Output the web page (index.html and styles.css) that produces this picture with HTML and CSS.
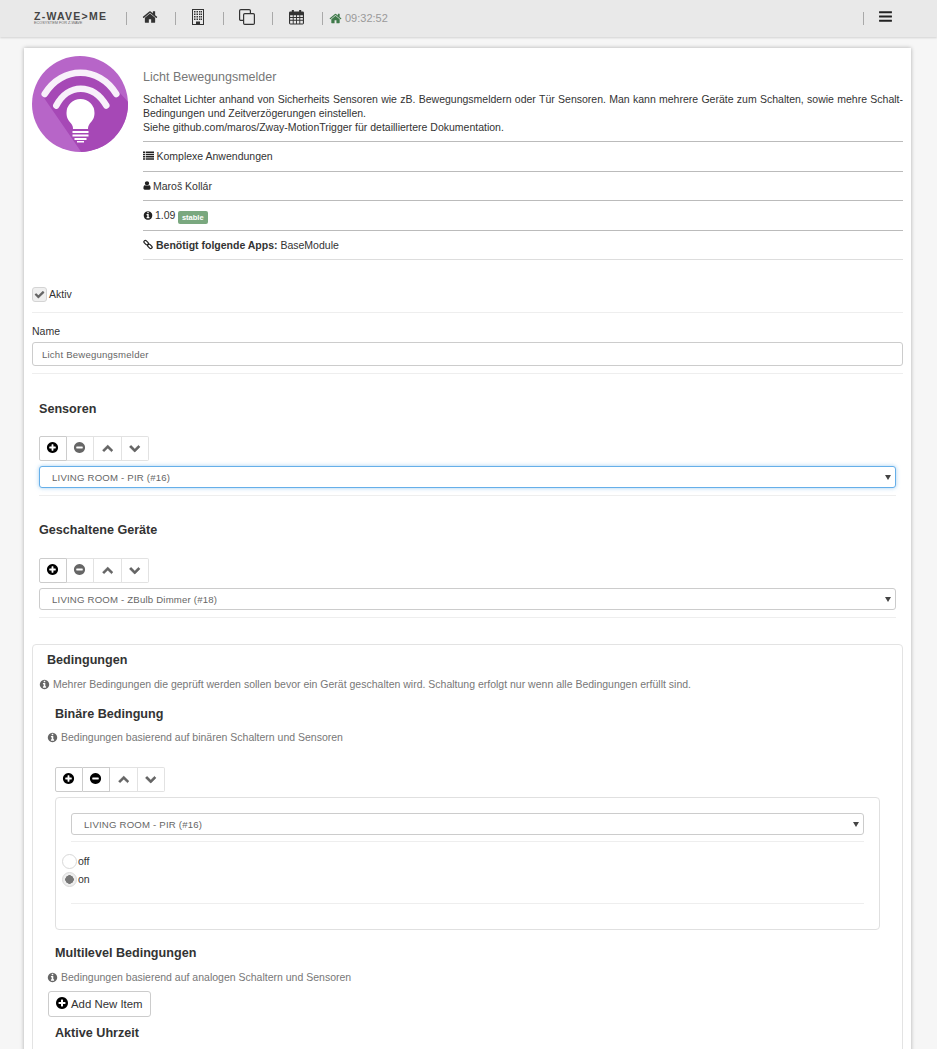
FILE: index.html
```html
<!DOCTYPE html>
<html lang="de">
<head>
<meta charset="utf-8">
<title>Licht Bewegungsmelder</title>
<link rel="stylesheet" href="styles.css">
</head>
<body>
<svg class="sprite" width="0" height="0" aria-hidden="true">
  <symbol id="i-home" viewBox="0 0 1792 1792"><path d="M1472 992v480q0 26-19 45t-45 19h-384v-384h-256v384h-384q-26 0-45-19t-19-45v-480q0-1 .5-3t.5-3l575-474 575 474q1 2 1 6zm223-69l-62 74q-8 9-21 11h-3q-13 0-21-7l-692-577-692 577q-12 8-24 7-13-2-21-11l-62-74q-8-10-7-23.500t11-21.500l719-599q32-26 76-26t76 26l244 204v-195q0-14 9-23t23-9h192q14 0 23 9t9 23v408l219 182q10 8 11 21.500t-7 23.500z"/></symbol>
  <symbol id="i-plus" viewBox="0 0 1792 1792"><path d="M1344 960v-128q0-26-19-45t-45-19h-256v-256q0-26-19-45t-45-19h-128q-26 0-45 19t-19 45v256h-256q-26 0-45 19t-19 45v128q0 26 19 45t45 19h256v256q0 26 19 45t45 19h128q26 0 45-19t19-45v-256h256q26 0 45-19t19-45zm320-64q0 209-103 385.500t-279.500 279.500-385.500 103-385.500-103-279.500-279.500-103-385.500 103-385.500 279.500-279.500 385.500-103 385.500 103 279.500 279.500 103 385.500z"/></symbol>
  <symbol id="i-minus" viewBox="0 0 1792 1792"><path d="M1344 960v-128q0-26-19-45t-45-19h-768q-26 0-45 19t-19 45v128q0 26 19 45t45 19h768q26 0 45-19t19-45zm320-64q0 209-103 385.500t-279.500 279.500-385.500 103-385.500-103-279.500-279.500-103-385.500 103-385.500 279.500-279.500 385.500-103 385.500 103 279.500 279.500 103 385.500z"/></symbol>
  <symbol id="i-up" viewBox="0 0 1792 1792"><path d="M1683 1331l-166 165q-19 19-45 19t-45-19l-531-531-531 531q-19 19-45 19t-45-19l-166-165q-19-19-19-45.500t19-45.500l742-741q19-19 45-19t45 19l742 741q19 19 19 45.500t-19 45.500z"/></symbol>
  <symbol id="i-down" viewBox="0 0 1792 1792"><path d="M1683 808l-742 741q-19 19-45 19t-45-19l-742-741q-19-19-19-45.500t19-45.500l166-165q19-19 45-19t45 19l531 531 531-531q19-19 45-19t45 19l166 165q19 19 19 45.500t-19 45.500z"/></symbol>
  <symbol id="i-bars" viewBox="0 0 1792 1792"><path d="M1664 1344v128q0 26-19 45t-45 19h-1408q-26 0-45-19t-19-45v-128q0-26 19-45t45-19h1408q26 0 45 19t19 45zm0-512v128q0 26-19 45t-45 19h-1408q-26 0-45-19t-19-45v-128q0-26 19-45t45-19h1408q26 0 45 19t19 45zm0-512v128q0 26-19 45t-45 19h-1408q-26 0-45-19t-19-45v-128q0-26 19-45t45-19h1408q26 0 45 19t19 45z"/></symbol>
  <symbol id="i-check" viewBox="0 0 1792 1792"><path d="M1671 566q0 40-28 68l-724 724-136 136q-28 28-68 28t-68-28l-136-136-362-362q-28-28-28-68t28-68l136-136q28-28 68-28t68 28l294 295 656-657q28-28 68-28t68 28l136 136q28 28 28 68z"/></symbol>
  <symbol id="i-user" viewBox="0 0 1792 1792"><path d="M1536 1399q0 109-62.500 187t-150.500 78h-854q-88 0-150.500-78t-62.500-187q0-85 8.500-160.500t31.500-152 58.500-131 94-89 134.500-34.500q131 128 313 128t313-128q76 0 134.500 34.500t94 89 58.500 131 31.500 152 8.500 160.500zm-256-887q0 159-112.500 271.500t-271.500 112.500-271.500-112.500-112.500-271.500 112.500-271.500 271.500-112.500 271.500 112.500 112.500 271.500z"/></symbol>
  <symbol id="i-info" viewBox="0 0 1792 1792"><path d="M1152 1376v-160q0-14-9-23t-23-9h-96v-512q0-14-9-23t-23-9h-320q-14 0-23 9t-9 23v160q0 14 9 23t23 9h96v320h-96q-14 0-23 9t-9 23v160q0 14 9 23t23 9h448q14 0 23-9t9-23zm-128-896v-160q0-14-9-23t-23-9h-192q-14 0-23 9t-9 23v160q0 14 9 23t23 9h192q14 0 23-9t9-23zm640 416q0 209-103 385.500t-279.500 279.500-385.500 103-385.500-103-279.500-279.500-103-385.500 103-385.500 279.500-279.500 385.500-103 385.500 103 279.500 279.500 103 385.500z"/></symbol>
  <symbol id="i-list" viewBox="0 0 16 16"><path d="M0 2h3v2.400H0zM4 2h12v2.400H4zM0 5.300h3v2.400H0zM4 5.300h12v2.400H4zM0 8.600h3V11H0zM4 8.600h12V11H4zM0 11.900h3v2.400H0zM4 11.900h12v2.400H4z"/></symbol>
  <symbol id="i-link" viewBox="0 0 16 16"><g fill="none" stroke="currentColor" stroke-width="2"><rect x="-4" y="-2.300" width="8" height="4.600" rx="2.300" transform="translate(5 5) rotate(45)"/><rect x="-4" y="-2.300" width="8" height="4.600" rx="2.300" transform="translate(11 11) rotate(45)"/></g></symbol>
  <symbol id="i-building" viewBox="0 0 12 16"><path d="M0 0h12v16H0zM1 1v14h3v-2.500h4V15h3V1z"/><path d="M2 2h1.500v1.500H2zM4.500 2H6v1.500H4.500zM7 2h1.500v1.500H7zM9 2h1v1.500H9zM2 4.500h1.500V6H2zM4.500 4.500H6V6H4.500zM7 4.500h1.500V6H7zM9 4.500h1V6H9zM2 7h1.500v1.500H2zM4.500 7H6v1.500H4.500zM7 7h1.500v1.500H7zM9 7h1v1.500H9zM2 9.500h1.500V11H2zM4.500 9.500H6V11H4.500zM7 9.500h1.500V11H7zM9 9.500h1V11H9z"/></symbol>
  <symbol id="i-clone" viewBox="0 0 16 16"><g fill="none" stroke="currentColor" stroke-width="1.200"><path d="M4 11.400H1.800a1.200 1.200 0 0 1-1.200-1.200V1.800A1.200 1.200 0 0 1 1.800.6h8.400a1.200 1.200 0 0 1 1.200 1.200V4"/><rect x="4.600" y="4.600" width="10.800" height="10.800" rx="1.200"/></g></symbol>
  <symbol id="i-calendar" viewBox="0 0 16 16"><path fill-rule="evenodd" d="M1.500 2H3V0.500h2.200V2h5.600V0.500H13V2h1.500A1.500 1.500 0 0 1 16 3.500v11a1.500 1.500 0 0 1-1.500 1.500h-13A1.500 1.500 0 0 1 0 14.500v-11A1.500 1.500 0 0 1 1.500 2zM1.200 6v2h2.800V6zM5 6v2h2.500V6zM8.500 6v2H11V6zM12 6v2h2.800V6zM1.200 9v2h2.800V9zM5 9v2h2.500V9zM8.500 9v2H11V9zM12 9v2h2.800V9zM1.200 12v2.800h2.800V12zM5 12v2.800h2.500V12zM8.500 12v2.800H11V12zM12 12v2.800h2.800V12z"/></symbol>
</svg>

<header class="topbar">
  <div class="brand">
    <span class="brand-name">Z-WAVE&gt;ME</span>
    <span class="brand-tag">ECOSYSTEM FOR Z-WAVE</span>
  </div>
  <nav class="nav">
    <a class="nav-item"><svg class="nav-icon"><use href="#i-home"/></svg></a>
    <a class="nav-item nav-item-narrow"><svg class="nav-icon nav-building"><use href="#i-building"/></svg></a>
    <a class="nav-item"><svg class="nav-icon"><use href="#i-clone"/></svg></a>
    <a class="nav-item nav-item-wide"><svg class="nav-icon nav-calendar"><use href="#i-calendar"/></svg></a>
    <span class="nav-clock"><svg class="clock-icon"><use href="#i-home"/></svg>09:32:52</span>
  </nav>
  <a class="nav-menu"><svg class="nav-icon nav-bars"><use href="#i-bars"/></svg></a>
</header>

<main class="card">
  <section class="app-head">
    <svg class="app-logo" viewBox="0 0 96 96">
      <defs><clipPath id="disc"><circle cx="48" cy="48" r="48"/></clipPath></defs>
      <circle cx="48" cy="48" r="48" fill="#b765c8"/>
      <path clip-path="url(#disc)" d="M10 39C30 9 67 9 87 36L100 50V100H52z" fill="#a648b6"/>
      <g fill="none" stroke="#f8f0fa" stroke-linecap="round">
        <path stroke-width="6.500" d="M12.700 38C30 9.700 67 9.700 84.300 38"/>
        <path stroke-width="6.500" d="M24.300 49.500C36 27 61 27 74.300 49.500"/>
      </g>
      <path fill="#fff" d="M48.500 43a14 14 0 0 0-14 14c0 6 3 8.500 5 11 1 1.500 1.500 3 1.500 5h15c0-2 .5-3.500 1.500-5 2-2.500 5-5 5-11a14 14 0 0 0-14-14z"/>
      <path fill="#fff" d="M40.500 75h16v2h-16zM40.500 78.500h16v2h-16zM42.500 82h12v2h-12zM45 85h7v1.500h-7z"/>
    </svg>
    <div class="app-info">
      <h1 class="app-title">Licht Bewegungsmelder</h1>
      <p class="app-desc">Schaltet Lichter anhand von Sicherheits Sensoren wie zB. Bewegungsmeldern oder Tür Sensoren. Man kann mehrere Geräte zum Schalten, sowie mehre Schalt-Bedingungen und Zeitverzögerungen einstellen.<br>Siehe github.com/maros/Zway-MotionTrigger für detailliertere Dokumentation.</p>
      <div class="meta meta-first"><svg class="ico ico-list"><use href="#i-list"/></svg>Komplexe Anwendungen</div>
      <div class="meta"><svg class="ico ico-user"><use href="#i-user"/></svg>Maroš Kollár</div>
      <div class="meta"><svg class="ico ico-info"><use href="#i-info"/></svg>1.09<span class="badge">stable</span></div>
      <div class="meta"><svg class="ico ico-link"><use href="#i-link"/></svg><strong>Benötigt folgende Apps:</strong>&nbsp;BaseModule</div>
    </div>
  </section>

  <div class="row-active">
    <label class="check"><svg class="check-mark"><use href="#i-check"/></svg></label>
    <span>Aktiv</span>
  </div>

  <div class="row-name">
    <label class="field-label">Name</label>
    <input class="text-input" type="text" value="Licht Bewegungsmelder">
  </div>

  <section class="group">
    <h2 class="group-title">Sensoren</h2>
    <div class="toolbar">
      <button class="tool tool-on"><svg><use href="#i-plus"/></svg></button>
      <button class="tool"><svg><use href="#i-minus"/></svg></button>
      <button class="tool tool-arrow"><svg><use href="#i-up"/></svg></button>
      <button class="tool tool-arrow"><svg><use href="#i-down"/></svg></button>
    </div>
    <select class="picker picker-focus"><option>LIVING ROOM - PIR (#16)</option></select>
  </section>

  <section class="group group-second">
    <h2 class="group-title">Geschaltene Geräte</h2>
    <div class="toolbar">
      <button class="tool tool-on"><svg><use href="#i-plus"/></svg></button>
      <button class="tool"><svg><use href="#i-minus"/></svg></button>
      <button class="tool tool-arrow"><svg><use href="#i-up"/></svg></button>
      <button class="tool tool-arrow"><svg><use href="#i-down"/></svg></button>
    </div>
    <select class="picker"><option>LIVING ROOM - ZBulb Dimmer (#18)</option></select>
  </section>

  <section class="panel">
    <h2 class="panel-title">Bedingungen</h2>
    <p class="help help-panel"><svg class="help-icon"><use href="#i-info"/></svg>Mehrer Bedingungen die geprüft werden sollen bevor ein Gerät geschalten wird. Schaltung erfolgt nur wenn alle Bedingungen erfüllt sind.</p>

    <h3 class="sub-title sub-binary">Binäre Bedingung</h3>
    <p class="help help-sub"><svg class="help-icon"><use href="#i-info"/></svg>Bedingungen basierend auf binären Schaltern und Sensoren</p>

    <div class="toolbar toolbar-sub">
      <button class="tool tool-on"><svg><use href="#i-plus"/></svg></button>
      <button class="tool tool-on"><svg><use href="#i-minus"/></svg></button>
      <button class="tool tool-arrow"><svg><use href="#i-up"/></svg></button>
      <button class="tool tool-arrow"><svg><use href="#i-down"/></svg></button>
    </div>
    <div class="inner-box">
      <div class="inner-select"><select class="picker picker-inner"><option>LIVING ROOM - PIR (#16)</option></select></div>
      <div class="radio-list">
        <div class="radio-row"><span class="radio"></span>off</div>
        <div class="radio-row"><span class="radio radio-on"></span>on</div>
      </div>
      <div class="inner-rule"></div>
    </div>

    <h3 class="sub-title sub-multi">Multilevel Bedingungen</h3>
    <p class="help help-sub help-multi"><svg class="help-icon"><use href="#i-info"/></svg>Bedingungen basierend auf analogen Schaltern und Sensoren</p>
    <button class="add-btn"><svg><use href="#i-plus"/></svg>Add New Item</button>
    <h3 class="sub-title sub-time">Aktive Uhrzeit</h3>
  </section>
</main>
</body>
</html>
```
FILE: styles.css
```css
* { box-sizing: border-box; }
html, body { height: 1049px; overflow: hidden; }
body {
  margin: 0;
  background: #f6f6f6;
  color: #333;
  font-family: "Liberation Sans", Arial, sans-serif;
  font-size: 10.5px;
  line-height: 14px;
}
svg { fill: currentColor; }
.sprite { position: absolute; }

.topbar {
  height: 37px;
  background: #e9e9e9;
  box-shadow: 0 1px 2px rgba(0,0,0,.15);
  display: flex;
  align-items: center;
  padding: 0 44px 0 34px;
}
.brand { width: 92px; display: flex; flex-direction: column; }
.brand-name { font-size: 10.5px; line-height: 9px; font-weight: 700; letter-spacing: 1.25px; color: #444; white-space: nowrap; }
.brand-tag { font-size: 3.800px; line-height: 5px; color: #666; white-space: nowrap; }
.nav { display: flex; align-items: center; flex: 1; }
.nav-item {
  height: 13px;
  width: 49px;
  border-left: 1px solid #a9a9a9;
  display: flex;
  align-items: center;
  padding-left: 15px;
  color: #333;
}
.nav-item-narrow { width: 48px; }
.nav-item-wide { width: 50px; }
.nav-icon { width: 16px; height: 16px; flex: none; margin-bottom: 4px; }
.nav-building { width: 12px; margin-left: 1px; }
.nav-calendar { width: 15px; margin-left: 1px; }
.nav-clock {
  border-left: 1px solid #a9a9a9;
  color: #9a9a9a;
  font-size: 11px;
  height: 13px;
  line-height: 13px;
  padding-left: 6px;
  display: flex;
  align-items: center;
  margin-top: -1px;
}
.clock-icon { width: 13px; height: 13px; color: #3f7a4a; margin-right: 3px; }
.nav-menu { border-left: 1px solid #a9a9a9; height: 13px; display: flex; align-items: center; padding-left: 14px; }
.nav-bars { width: 15px; height: 15px; color: #222; }

.card {
  margin: 11px 26px 0 24px;
  height: 1100px;
  background: #fff;
  box-shadow: 0 0 4px rgba(0,0,0,.3);
  padding: 8px 8px 0;
}
.app-head { display: flex; height: 212px; }
.app-logo { width: 96px; height: 96px; flex: none; margin-right: 15px; }
.app-info { flex: 1; min-width: 0; }
.app-title { margin: 14px 0 0; font-size: 12.500px; line-height: 14px; font-weight: 400; color: #777; }
.app-desc { margin: 8px 0 0; padding-bottom: 6px; line-height: 14px; color: #333; text-align: justify; }
.meta {
  border-top: 1px solid #bbb;
  height: 29.700px;
  display: flex;
  align-items: center;
  padding-bottom: 1px;
  white-space: nowrap;
}
.meta:last-child { border-bottom: 1px solid #ddd; height: 30px; }
.meta-first { margin-top: 1px; }
.ico { width: 11px; height: 11px; margin-right: 3px; color: #222; flex: none; }
.ico-list { margin-right: 2.500px; }
.ico-user { width: 10px; margin: 0 1px 0 -1px; }
.ico-info { width: 10px; margin-right: 2px; }
.ico-link { width: 10px; }
.meta strong { color: #333; }
.badge {
  background: #7aa87f;
  color: #fff;
  font-size: 7.500px;
  font-weight: 700;
  line-height: 13px;
  border-radius: 2px;
  padding: 0 4px;
  margin: 4px 0 0 2.500px;
}

.row-active {
  margin-top: 19px;
  height: 26px;
  display: flex;
  align-items: flex-start;
  gap: 2px;
  border-bottom: 1px solid #eee;
}
.row-active span { line-height: 14px; }
.check {
  width: 15px;
  height: 15px;
  border: 1px solid #d4d4d4;
  border-radius: 3px;
  background: #efefef;
  display: flex;
  align-items: center;
  justify-content: center;
  color: #666;
}
.check-mark { width: 11px; height: 11px; }
.row-name { margin-top: 11px; padding-bottom: 7px; border-bottom: 1px solid #eee; }
.field-label { display: block; line-height: 14px; margin-bottom: 4px; }
.text-input {
  display: block;
  width: 100%;
  height: 24px;
  padding: 0 9px;
  border: 1px solid #ccc;
  border-radius: 3px;
  font: 9.600px "Liberation Sans", Arial, sans-serif;
  letter-spacing: .2px;
  color: #666;
  background: #fff;
}

.group { margin: 27px 7px 0; padding-bottom: 7px; border-bottom: 1px solid #eee; }
.group-second { margin-top: 26px; }
.group-title, .panel-title, .sub-title { margin: 0; font-size: 12.600px; line-height: 16px; font-weight: 700; color: #333; }
.toolbar { display: flex; margin-top: 19px; }
.group-second .toolbar { margin-top: 20px; }
.tool {
  width: 27.500px;
  height: 25px;
  padding: 0;
  margin: 0;
  border: 1px solid #e2e2e2;
  border-left-width: 0;
  background: #fff;
  display: flex;
  align-items: center;
  justify-content: center;
  color: #666;
}
.tool:first-child { border-left-width: 1px; border-radius: 2px 0 0 2px; }
.tool:last-child { border-radius: 0 2px 2px 0; }
.tool svg { width: 13px; height: 13px; margin-top: -2px; }
.tool-arrow svg { width: 11.500px; height: 11.500px; stroke: currentColor; stroke-width: 60px; }
.tool-on { color: #000; border-color: #ccc; }
.picker {
  display: block;
  width: 100%;
  height: 22px;
  margin-top: 5px;
  padding: 0 12px;
  border: 1px solid #ccc;
  border-radius: 3px;
  appearance: none;
  background: #fff url("data:image/svg+xml,%3Csvg xmlns='http://www.w3.org/2000/svg' width='6' height='6'%3E%3Cpath d='M0 1h6L3 6z' fill='%23444'/%3E%3C/svg%3E") no-repeat right 4px center;
  font: 9.600px "Liberation Sans", Arial, sans-serif;
  letter-spacing: .2px;
  color: #666;
}
.picker-focus { border-color: #66afe9; box-shadow: 0 0 4px rgba(102,175,233,.6); outline: 0; }

.panel {
  margin-top: 26px;
  border: 1px solid #e3e3e3;
  border-radius: 4px;
  height: 600px;
  padding: 7px 6px;
}
.panel-title { padding-left: 8px; }
.help { margin: 0; color: #777; font-size: 10.500px; line-height: 14px; display: flex; align-items: center; }
.help-icon { width: 11px; height: 11px; margin-right: 3px; color: #666; flex: none; }
.help-panel { margin-top: 9px; }
.sub-title { padding-left: 16px; }
.sub-binary { margin-top: 15px; }
.help-sub { margin-top: 8px; padding-left: 8px; }
.help-multi { margin-top: 9px; }
.toolbar-sub { margin: 23px 0 0 16px; }
.inner-box {
  margin: 5px 16px 0 16px;
  height: 133px;
  border: 1px solid #e0e0e0;
  border-radius: 4px;
  padding: 15px 15px 0;
}
.inner-select { padding-bottom: 6px; border-bottom: 1px solid #eee; }
.picker-inner { margin-top: 0; }
.radio-list { margin: 10px 0 0 -9px; }
.radio-row { display: flex; align-items: center; height: 18px; color: #333; }
.radio {
  width: 15px;
  height: 15px;
  margin-right: 1px;
  border: 1px solid #d8d8d8;
  border-radius: 50%;
  background: #fff;
  display: block;
}
.radio-on { background: radial-gradient(circle, #777 0 4px, #eee 4.500px); }
.inner-rule { margin-top: 15px; border-top: 1px solid #eee; }
.sub-multi { margin-top: 15px; }
.add-btn {
  display: flex;
  align-items: center;
  width: 103px;
  height: 26px;
  margin: 7px 0 0 9px;
  padding: 0 6px;
  border: 1px solid #ccc;
  border-radius: 3px;
  background: #fff;
  font: 11.400px "Liberation Sans", Arial, sans-serif;
  color: #333;
}
.add-btn svg { width: 14px; height: 14px; color: #000; margin: -3px 2px 0 0; flex: none; }
.sub-time { margin-top: 8px; }
```
